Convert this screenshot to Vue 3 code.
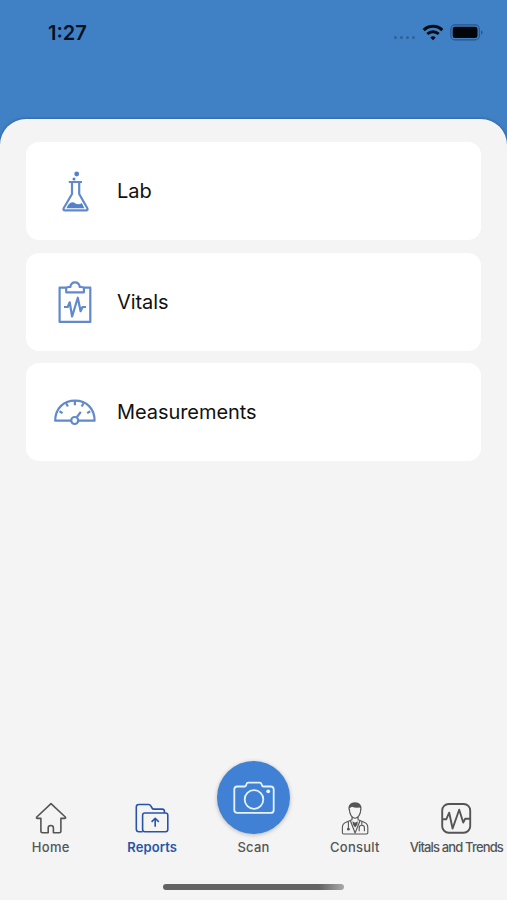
<template>
  <div class="screen">
    <header class="status-bar">
      <span class="time">1:27</span>
      <div class="status-icons">
        <span class="signal"><i v-for="n in 4" :key="n"></i></span>
        <svg class="wifi" width="22" height="17" viewBox="0 0 22 17" fill="none" stroke="#050a14" stroke-width="3">
          <path d="M1.7 6.1a13.4 13.4 0 0 1 18.6 0"/>
          <path d="M5.3 10a8.2 8.2 0 0 1 11.4 0"/>
          <path d="M11 16.3l-2.7-2.8a3.8 3.8 0 0 1 5.4 0z" fill="#050a14" stroke="none"/>
        </svg>
        <svg class="battery" width="34" height="17" viewBox="0 0 34 17">
          <rect x="0.9" y="0.9" width="28.4" height="15" rx="4" fill="none" stroke="#285587" stroke-width="1.1"/>
          <rect x="2.7" y="2.8" width="24.8" height="11.2" rx="2.3" fill="#02050a"/>
          <path d="M31 6.2q3.2 2.2 0 4.6z" fill="#285587"/>
        </svg>
      </div>
    </header>

    <main class="panel">
      <button v-for="item in reports" :key="item.id" class="card">
        <!-- Flask -->
        <svg v-if="item.id === 'lab'" class="card-icon" viewBox="0 0 42 42">
          <circle cx="22.7" cy="4" r="2.4" class="solid"/>
          <circle cx="20" cy="9" r="1.5" class="solid"/>
          <path d="M14.8 12h13.2M18 12v12L9.8 38q-1.2 2.4 1.2 2.4h21q2.4 0 1.2-2.4L25.2 24V12"/>
          <path d="M14.2 34.8q4-4.2 7.2-1.2 3.6 1.8 6.4-.6l2.6 5.2H12.4z" class="solid"/>
        </svg>
        <!-- Clipboard with pulse -->
        <svg v-else-if="item.id === 'vitals'" class="card-icon" viewBox="0 0 42 42">
          <path d="M12 6.7H5.6v34.2h30.7V6.7H30"/>
          <path d="M12.2 11.3V7.8q0-1.8 2-1.8h2.1c.8-6.2 8.6-6.2 9.5 0h2.1q2 0 2 1.8v3.5z"/>
          <path d="M10 26h3.7l2-4.7 2.4 14.2 5.7-18.8 2.8 13.5 1.9-4.2H32"/>
        </svg>
        <!-- Gauge -->
        <svg v-else class="card-icon" viewBox="0 0 42 42">
          <path d="M17 29.7H1.2C1.2 17.5 9.5 9.7 21 9.7s19.6 7.8 19.6 20H24.4"/>
          <circle cx="20.7" cy="29.5" r="3.5"/>
          <path d="M22.6 26.5l4.2-5.6M20.9 10v4.3M12.1 12.2l1.8 3.3M5.5 20.2l3.1 1.9M29.5 12.2l-1.8 3.3M36.2 20.2l-3 1.9"/>
        </svg>
        <span class="card-label">{{ item.label }}</span>
      </button>
    </main>

    <nav class="tab-bar">
      <button v-for="tab in tabs" :key="tab.id" class="tab" :class="[tab.id, { active: tab.id === activeTab }]" @click="activeTab = tab.id">
        <svg v-if="tab.id === 'home'" class="tab-icon" viewBox="0 0 34 34">
          <path d="M17 2.7L2.8 16q-.9 1.4.8 1.4h3.3v12.7q0 1.7 1.7 1.7h5.6v-5q0-2.3 2.6-2.3t2.6 2.3v5h5.8q1.7 0 1.7-1.7V17.4h3.6q1.7 0 .8-1.4z"/>
        </svg>
        <svg v-else-if="tab.id === 'reports'" class="tab-icon" viewBox="0 0 34 34">
          <path d="M7.6 30.8H4q-2.7 0-2.7-2.7V6q0-2.5 2.5-2.5h9.6q1.7 0 2.4 1.3l1.2 2.2q.6 1.1 2.1 1.1h8q2.3 0 2.3 2.2v1.6"/>
          <rect x="7.6" y="12" width="25.2" height="18.8" rx="2.2"/>
          <path d="M20.2 25.8v-8.3M16.6 20.9l3.6-3.6 3.6 3.6"/>
        </svg>
        <span v-else-if="tab.id === 'scan'" class="scan-button">
          <svg width="42" height="33" viewBox="0 0 42 33">
            <path d="M4.3 5.5h7.4q1 0 1.3-1l.4-1.3q.5-1.5 2-1.5h11.2q1.5 0 2 1.5l.4 1.3q.3 1 1.3 1h7.4q3 0 3 3v20.4q0 3-3 3H4.3q-3 0-3-3V8.5q0-3 3-3z"/>
            <circle cx="21" cy="18.5" r="9.3"/>
            <circle cx="35.2" cy="10.3" r="1.9" class="dot"/>
          </svg>
        </span>
        <svg v-else-if="tab.id === 'consult'" class="tab-icon doctor" viewBox="0 0 34 34">
          <path d="M10.9 9.5C9.2 4.4 12.8 1.2 17 1.2s7.8 3.2 6.1 8.3l-1.3-3q-5 .5-7.8-.7L11.9 7z" class="solid"/>
          <path d="M11.4 8c0 5.3 2.6 9.2 5.6 9.2s5.8-3.9 5.8-9.2M14 16v2.8L8 21.2q-3.6 1.3-3.6 5.3v5.3q0 1.2 1.2 1.2h23q1.2 0 1.2-1.2v-5.3q0-4-3.6-5.3L20.1 18.8V16"/>
          <path d="M12.4 19.8L17.1 32l4.9-12.2M10.4 20.7v7M23.8 20.7v3.6M21.2 30.2v-3.4q0-2.5 2.6-2.5t2.6 2.5v3.4"/>
          <path d="M14.4 20.3l2.7 1.4 2.8-1.4-.6 3.4-2.2 2.8-2.1-2.8z" class="solid"/>
          <circle cx="10.4" cy="28.2" r="1.4" class="solid"/>
        </svg>
        <svg v-else class="tab-icon" viewBox="0 0 34 34">
          <rect x="3.2" y="3" width="28" height="28.7" rx="6.5" stroke-width="1.9"/>
          <path d="M3.2 18.3h4l3-6.6 3.4 15.8 6.6-18.8 4 12.8 2-3.8h5" stroke-width="1.9"/>
        </svg>
        <span class="tab-label">{{ tab.label }}</span>
      </button>
    </nav>

    <div class="home-indicator"></div>
  </div>
</template>

<script setup>
import { ref } from 'vue'

const activeTab = ref('reports')

const reports = [
  { id: 'lab', label: 'Lab' },
  { id: 'vitals', label: 'Vitals' },
  { id: 'measurements', label: 'Measurements' }
]

const tabs = [
  { id: 'home', label: 'Home' },
  { id: 'reports', label: 'Reports' },
  { id: 'scan', label: 'Scan' },
  { id: 'consult', label: 'Consult' },
  { id: 'trends', label: 'Vitals and Trends' }
]
</script>

<style>
body {
  margin: 0;
}
</style>

<style scoped>
.screen {
  display: flex;
  flex-direction: column;
  width: 100%;
  height: 900px;
  overflow: hidden;
  background: #4080c5;
  font-family: Inter, "Liberation Sans", sans-serif;
}

button {
  border: none;
  background: none;
  padding: 0;
  font-family: inherit;
  cursor: pointer;
}

svg {
  display: block;
  flex-shrink: 0;
}

.status-bar {
  display: flex;
  justify-content: space-between;
  height: 119px;
  flex-shrink: 0;
  box-sizing: border-box;
  padding: 24px 23px 0 48px;
}

.time {
  font-size: 20px;
  line-height: 19px;
  font-weight: 600;
  color: #07101f;
}

.status-icons {
  display: flex;
  align-items: flex-start;
}

.signal {
  display: flex;
  gap: 3px;
  margin: 12px 7px 0 0;
}

.signal i {
  width: 3px;
  height: 3px;
  border-radius: 50%;
  background: #2e609b;
}

.wifi {
  margin-right: 6px;
}

.panel {
  flex: 1;
  display: flex;
  flex-direction: column;
  gap: 12.5px;
  padding: 23px 26px 0;
  border-radius: 26px 26px 0 0;
  background: #f4f4f4;
  box-shadow: 0 0 3px rgba(20, 50, 90, 0.6);
}

.card {
  display: flex;
  align-items: center;
  height: 98px;
  padding: 0 28px;
  border-radius: 13px;
  background: #fff;
}

.card-icon {
  width: 42px;
  height: 42px;
  margin-right: 21px;
  fill: none;
  stroke: #6189cc;
  stroke-width: 2.2;
  stroke-linejoin: round;
}

.card-icon .solid {
  fill: #5481cb;
  stroke: none;
}

.card-label {
  font-size: 20px;
  line-height: 24px;
  letter-spacing: -0.06px;
  color: #111;
}

.tab-bar {
  display: flex;
  align-items: flex-end;
  height: 96px;
  flex-shrink: 0;
  background: #f4f4f4;
}

.tab {
  flex: 1 1 0;
  min-width: 0;
  display: flex;
  flex-direction: column;
  align-items: center;
  color: #555;
}

.tab.active {
  color: #2854a8;
}

.tab-icon {
  width: 34px;
  height: 34px;
  margin-bottom: 4px;
  fill: none;
  stroke: currentColor;
  stroke-width: 1.6;
  stroke-linejoin: round;
}

.doctor {
  stroke-width: 1.1;
}

.doctor .solid {
  fill: currentColor;
  stroke: none;
}

.scan-button {
  display: flex;
  align-items: center;
  justify-content: center;
  width: 73px;
  height: 73px;
  margin-bottom: 5px;
  border-radius: 50%;
  background: #4081d6;
  box-shadow: 0 1px 4px rgba(0, 0, 0, 0.25);
}

.scan-button svg {
  fill: none;
  stroke: #e4f3ff;
  stroke-width: 1.8;
}

.scan-button .dot {
  fill: #e4f3ff;
  stroke: none;
}

.tab-label {
  font-size: 13px;
  line-height: 16px;
  font-weight: 500;
  letter-spacing: 0.25px;
  white-space: nowrap;
}

.active .tab-label {
  font-weight: 600;
  letter-spacing: 0.1px;
}

.trends .tab-label {
  letter-spacing: -0.85px;
}

.home-indicator {
  display: flow-root;
  height: 45px;
  flex-shrink: 0;
  background: #f4f4f4;
}

.home-indicator::before {
  content: '';
  display: block;
  width: 181px;
  height: 6px;
  margin: 29px auto 0;
  border-radius: 3px;
  background: linear-gradient(90deg, #636363 86%, #a8a8a8);
}
</style>
